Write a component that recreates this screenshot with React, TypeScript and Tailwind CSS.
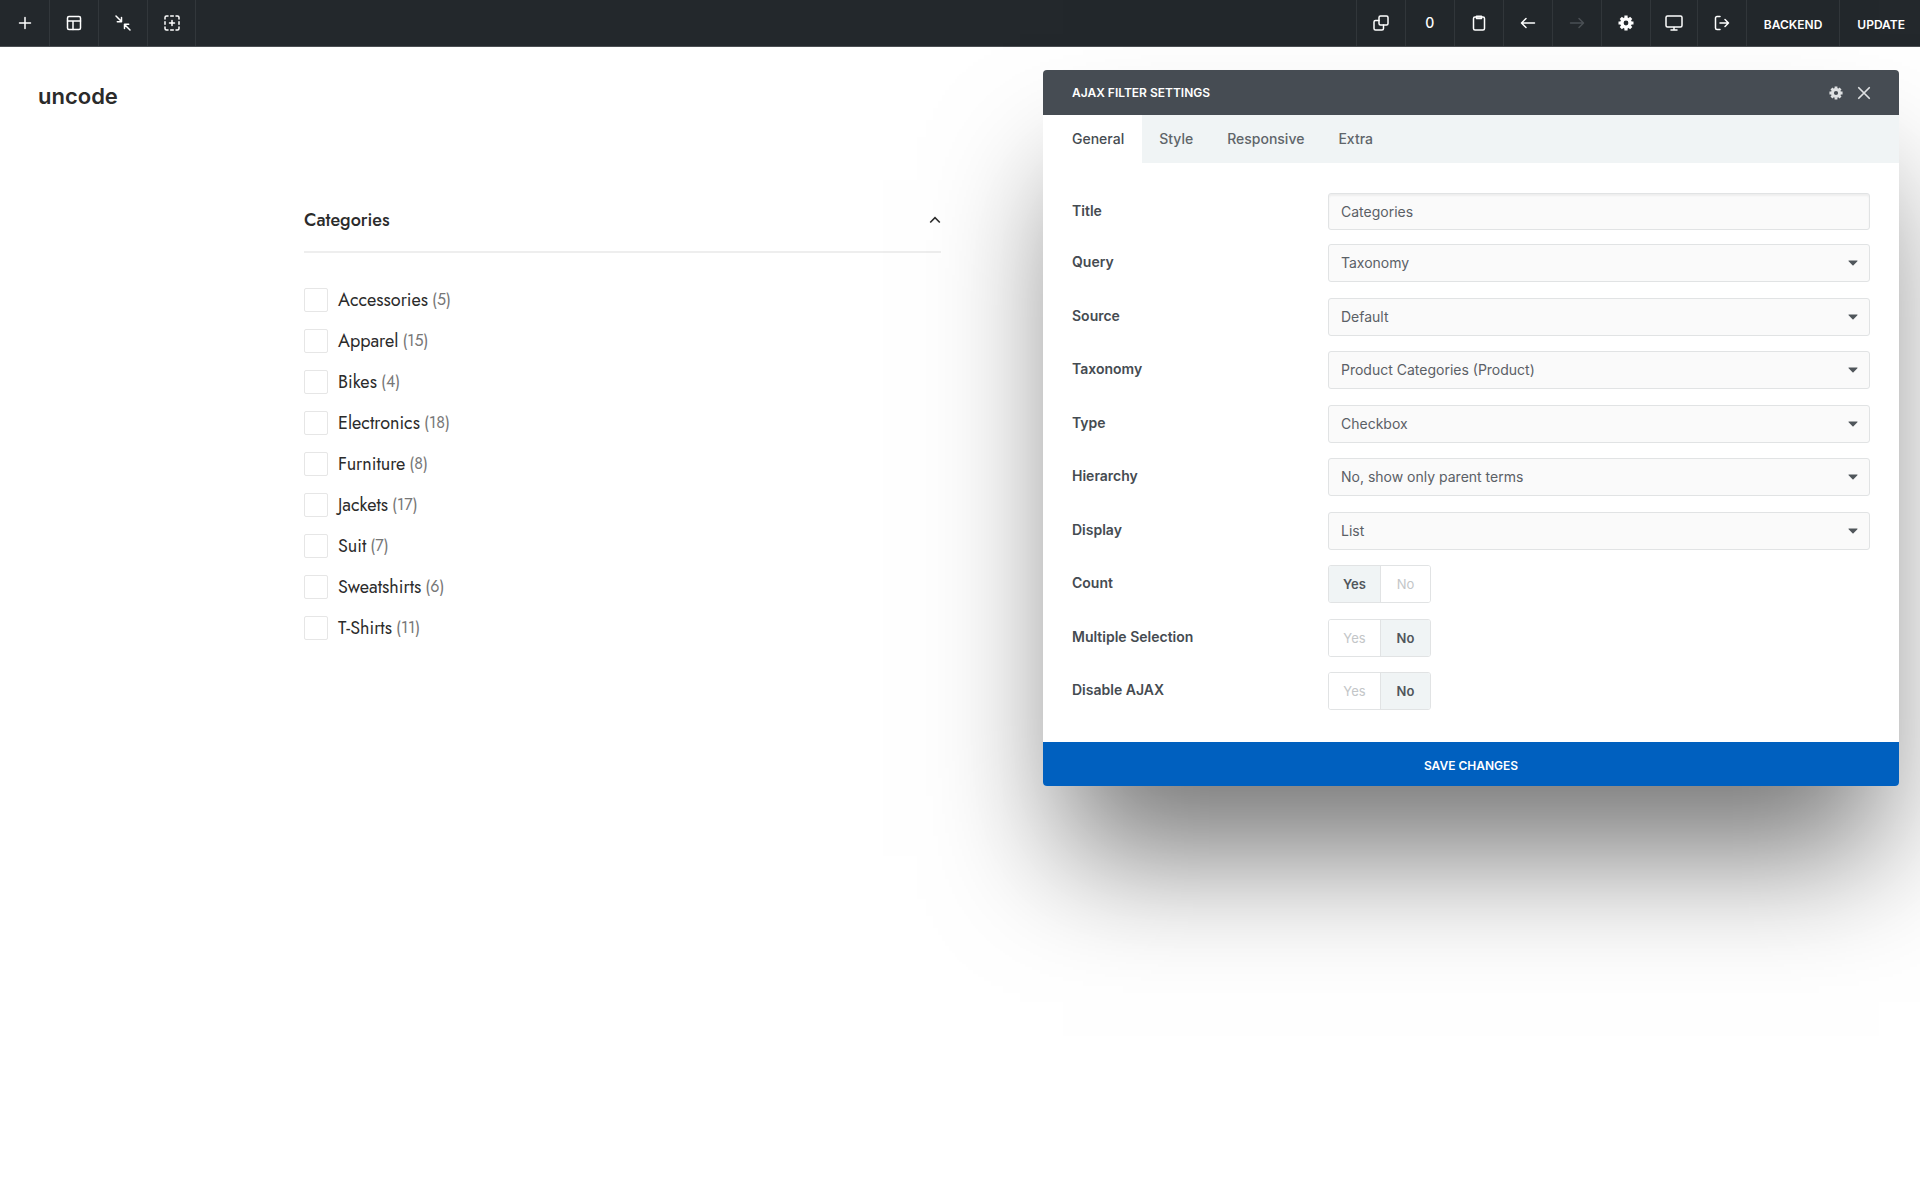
import { useState } from "react";
import type { ReactNode } from "react";

type IconProps = { children: ReactNode; className?: string };

function Icon({ children, className = "size-4" }: IconProps) {
  return (
    <svg
      viewBox="0 0 16 16"
      fill="none"
      stroke="currentColor"
      strokeWidth="1.5"
      strokeLinecap="round"
      strokeLinejoin="round"
      className={className}
      aria-hidden="true"
    >
      {children}
    </svg>
  );
}

function Gear({ className = "size-4" }: { className?: string }) {
  return (
    <svg viewBox="0 0 16 16" fill="none" stroke="currentColor" className={className} aria-hidden="true">
      <circle cx="8" cy="8" r="4.100" strokeWidth="3.400" />
      <path
        d="M8 3V.500M8 13v2.500M3 8H.500M13 8h2.500M4.500 4.500L2.800 2.800M11.500 4.500l1.700-1.700M4.500 11.500l-1.700 1.700M11.500 11.500l1.700 1.700"
        strokeWidth="3.200"
      />
    </svg>
  );
}

const leftTools = [
  { label: "Add element", width: "w-[50px]", icon: <Icon><path d="M8 2.500v11M2.500 8h11" /></Icon> },
  {
    label: "Templates",
    width: "w-[49px]",
    icon: <Icon><rect x="1.500" y="1.500" width="13" height="13" rx="1.500" /><path d="M1.500 6h13M7 6v8.500" /></Icon>,
  },
  {
    label: "Collapse",
    width: "w-[49px]",
    icon: <Icon><path d="M1 1l5.500 5.500M6.500 2.500v4.200H2.300M15 15L9.500 9.500M9.500 13.500V9.300h4.200" /></Icon>,
  },
  {
    label: "Add row",
    width: "w-[48px]",
    icon: (
      <Icon>
        <path d="M1 4V2.500A1.500 1.500 0 0 1 2.500 1H4M6.700 1h2.600M12 1h1.500A1.500 1.500 0 0 1 15 2.500V4M15 6.700v2.600M15 12v1.500a1.500 1.500 0 0 1-1.500 1.500H12M9.300 15H6.700M4 15H2.500A1.500 1.500 0 0 1 1 13.500V12M1 9.300V6.700M8 5.500v5M5.500 8h5" />
      </Icon>
    ),
  },
];

const rightTools = [
  {
    label: "Copy",
    width: "w-[49px]",
    icon: <Icon><rect x="6" y="1" width="9" height="9" rx="1.500" /><path d="M6 5.500H2.500A1.500 1.500 0 0 0 1 7v6.500A1.500 1.500 0 0 0 2.500 15H9a1.500 1.500 0 0 0 1.500-1.500V10" /></Icon>,
  },
  { label: "Clipboard count", width: "w-[49px]", icon: <span className="text-sm font-medium">0</span> },
  {
    label: "Paste",
    width: "w-[49px]",
    icon: <Icon><rect x="2.500" y="2" width="11" height="13" rx="1.500" /><path d="M5.500 1.200h5v2.200h-5z" /></Icon>,
  },
  { label: "Undo", width: "w-[49px]", icon: <Icon><path d="M14.500 8H1.800M6 3.500L1.500 8 6 12.500" /></Icon> },
  {
    label: "Redo",
    width: "w-[49px]",
    icon: <Icon className="size-4 text-[#4b5055]"><path d="M1.500 8h12.700M10 3.500L14.500 8 10 12.500" /></Icon>,
  },
  { label: "Page settings", width: "w-[49px]", icon: <Gear /> },
  {
    label: "Preview size",
    width: "w-[47px]",
    icon: (
      <svg viewBox="0 0 18 16" fill="none" stroke="currentColor" strokeWidth="1.5" strokeLinecap="round" strokeLinejoin="round" className="h-4 w-[18px]" aria-hidden="true">
        <rect x="1" y="1" width="16" height="11" rx="1.500" />
        <path d="M6 15h6M9 12.500V15" />
      </svg>
    ),
  },
  {
    label: "Exit",
    width: "w-[49px]",
    icon: <Icon><path d="M6 1.500H3A1.500 1.500 0 0 0 1.500 3v10A1.500 1.500 0 0 0 3 14.500h3M6 8h8.500M11 4.500L14.500 8 11 11.500" /></Icon>,
  },
];

const categories: [string, number][] = [
  ["Accessories", 5],
  ["Apparel", 15],
  ["Bikes", 4],
  ["Electronics", 18],
  ["Furniture", 8],
  ["Jackets", 17],
  ["Suit", 7],
  ["Sweatshirts", 6],
  ["T-Shirts", 11],
];

const selects: [string, string][] = [
  ["Query", "Taxonomy"],
  ["Source", "Default"],
  ["Taxonomy", "Product Categories (Product)"],
  ["Type", "Checkbox"],
  ["Hierarchy", "No, show only parent terms"],
  ["Display", "List"],
];

const toggles: [string, boolean][] = [
  ["Count", true],
  ["Multiple Selection", false],
  ["Disable AJAX", false],
];

const tabs = ["General", "Style", "Responsive", "Extra"];

function Toolbar() {
  return (
    <header className="flex h-[47px] items-stretch justify-between border-b border-[#4b4f53] bg-[#23282c] text-white">
      <div className="flex">
        {leftTools.map((t) => (
          <button
            key={t.label}
            type="button"
            aria-label={t.label}
            className={`flex items-center justify-center border-r border-[#32373b] ${t.width}`}
          >
            {t.icon}
          </button>
        ))}
      </div>
      <div className="flex">
        {rightTools.map((t) => (
          <button
            key={t.label}
            type="button"
            aria-label={t.label}
            className={`flex items-center justify-center border-l border-[#32373b] ${t.width}`}
          >
            {t.icon}
          </button>
        ))}
        <button type="button" className="border-l border-[#32373b] px-[17px] pt-1 text-xs font-semibold">
          BACKEND
        </button>
        <button type="button" className="border-l border-[#32373b] pr-[15px] pl-[17px] pt-1 text-xs font-semibold">
          UPDATE
        </button>
      </div>
    </header>
  );
}

function CategoryFilter() {
  return (
    <section className="mt-[87px] ml-[304px] w-[637px] font-['Jost','Lato',sans-serif] text-[#2b2b2b]">
      <h2 className="border-b-2 border-[#eeeeee] pb-[10px]">
        <button type="button" className="flex h-[43px] w-full items-center justify-between text-lg font-medium">
          Categories
          <svg viewBox="0 0 12 8" fill="none" stroke="currentColor" strokeWidth="1.6" className="h-2 w-3" aria-hidden="true">
            <path d="M1.200 6.500L6 1.700l4.800 4.800" />
          </svg>
        </button>
      </h2>
      <ul className="mt-[26px]">
        {categories.map(([name, count]) => (
          <li key={name}>
            <label className="flex h-[41px] items-center text-lg">
              <input type="checkbox" className="size-6 appearance-none rounded-xs border border-[#e6e6e6] bg-white" />
              <span className="ml-[10px]">{name}</span>
              <span className="ml-1 text-base text-[#777777]">({count})</span>
            </label>
          </li>
        ))}
      </ul>
    </section>
  );
}

const labelStyle = "w-64 shrink-0 pt-2 text-sm leading-5 font-semibold text-[#454b51]";
const fieldStyle =
  "w-full appearance-none rounded-[3px] border border-[#e1e3e4] bg-[#fafafa] px-3 text-sm text-[#5a6066]";

function Toggle({ label, initial }: { label: string; initial: boolean }) {
  const [on, setOn] = useState(initial);
  const active = "bg-[#f0f4f5] font-semibold text-[#50565b]";
  const idle = "bg-white font-normal text-[#c3c6c8]";
  return (
    <div role="group" aria-label={label} className="flex h-[38px] w-[103px] overflow-hidden rounded-[3px] border border-[#e1e3e4] text-[13px]">
      <button type="button" aria-pressed={on} onClick={() => setOn(true)} className={`w-[52px] border-r border-[#e1e3e4] pt-0.5 ${on ? active : idle}`}>
        Yes
      </button>
      <button type="button" aria-pressed={!on} onClick={() => setOn(false)} className={`flex-1 pt-0.5 ${on ? idle : active}`}>
        No
      </button>
    </div>
  );
}

function SettingsDialog() {
  const [tab, setTab] = useState("General");
  return (
    <section
      role="dialog"
      aria-labelledby="dialog-title"
      className="absolute top-[70px] right-[21px] flex w-[856px] flex-col rounded bg-white shadow-[0_90px_120px_-20px_rgba(0,0,0,0.53)]"
    >
      <header className="flex h-[45px] items-center rounded-t bg-[#464c53] pr-7 pl-[29px] text-white">
        <h1 id="dialog-title" className="flex-1 text-xs font-semibold">
          AJAX FILTER SETTINGS
        </h1>
        <button type="button" aria-label="Dialog settings" className="text-[#dfe1e3]">
          <Gear className="size-[14px]" />
        </button>
        <button type="button" aria-label="Close" className="ml-[14px] text-[#dfe1e3]">
          <Icon className="size-[14px]">
            <path d="M2 2l12 12M14 2L2 14" strokeWidth="2" />
          </Icon>
        </button>
      </header>
      <div role="tablist" className="flex h-12 bg-[#f0f4f5] text-sm font-medium">
        {tabs.map((name) => (
          <button
            key={name}
            type="button"
            role="tab"
            aria-selected={tab === name}
            onClick={() => setTab(name)}
            className={`px-[17px] first:pr-[18px] first:pl-[29px] ${tab === name ? "bg-white text-[#454b51]" : "text-[#5f656a]"}`}
          >
            {name}
          </button>
        ))}
      </div>
      <form className="px-[29px] pt-[30px] pb-8" onSubmit={(e) => e.preventDefault()}>
        <div className="flex">
          <label htmlFor="title" className={labelStyle}>Title</label>
          <input
            id="title"
            type="text"
            defaultValue="Categories"
            className={`h-[37px] ${fieldStyle} shadow-[inset_0_2px_2px_rgba(0,0,0,0.05)]`}
          />
        </div>
        <div className="mt-[14px] grid min-h-[466px] content-between">
          {selects.map(([label, value]) => (
            <div key={label} className="flex">
              <label htmlFor={label} className={labelStyle}>{label}</label>
              <div className="relative w-full">
                <select id={label} defaultValue={value} className={`h-[38px] ${fieldStyle}`}>
                  <option>{value}</option>
                </select>
                <svg viewBox="0 0 10 6" fill="currentColor" className="pointer-events-none absolute top-4 right-3 h-[6px] w-[10px] text-[#50565b]" aria-hidden="true">
                  <path d="M1 .5h8c.5 0 .7.500.400.800L5.500 5.300a.7.7 0 0 1-1 0L.600 1.300C.300 1 .500.500 1 .5z" />
                </svg>
              </div>
            </div>
          ))}
          {toggles.map(([label, on]) => (
            <div key={label} className="flex">
              <span className={labelStyle}>{label}</span>
              <Toggle label={label} initial={on} />
            </div>
          ))}
        </div>
      </form>
      <button type="button" className="h-11 rounded-b bg-[#0060bf] pt-1 text-xs font-semibold text-white">
        SAVE CHANGES
      </button>
    </section>
  );
}

export default function App() {
  return (
    <div className="relative min-h-screen overflow-hidden bg-white font-['Inter',sans-serif]">
      <Toolbar />
      <main>
        <a href="#home" className="mt-[34px] ml-[38px] block w-fit text-[22px] leading-[30px] font-semibold text-[#2b2b2b]">
          uncode
        </a>
        <CategoryFilter />
      </main>
      <SettingsDialog />
    </div>
  );
}
